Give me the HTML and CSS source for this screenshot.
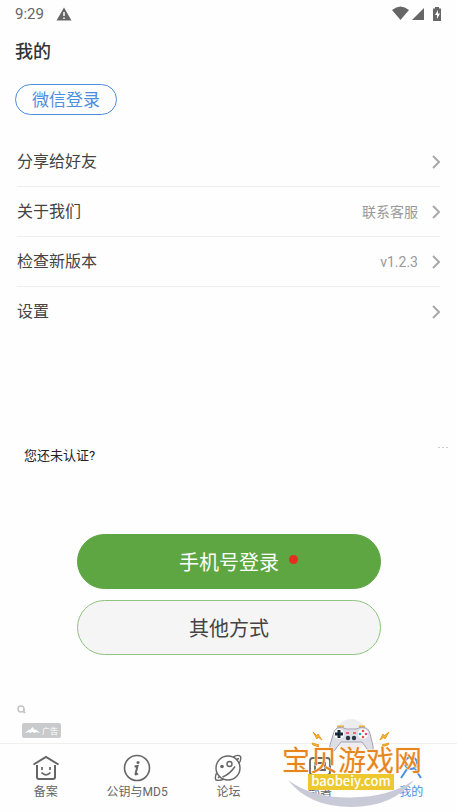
FILE: index.html
```html
<!DOCTYPE html>
<html lang="zh-CN">
<head>
<meta charset="utf-8">
<meta name="viewport" content="width=device-width, initial-scale=1">
<title>我的</title>
<link rel="stylesheet" href="styles.css">
</head>
<body>
<header class="status">
  <span class="time">9:29</span>
  <svg class="warn" width="16" height="14" viewBox="0 0 16 14"><path d="M8 .5 15.500 13.500H.5Z" fill="#666"/><path d="M8 5v4M8 10.500v1.500" stroke="#fff" stroke-width="1.500"/></svg>
  <svg class="signals" width="50" height="16" viewBox="0 0 50 16" fill="#666"><path d="M0 4Q8.500-3 17 4L8.500 14Z"/><path d="M32 2v12H20Z"/><path d="M43 1h4v1.500h2V15h-8V2.500h2Z"/><path d="m46 4-3 5h2v4l3-5.500h-2Z" fill="#fff"/></svg>
</header>
<main class="page">
  <h1 class="title">我的</h1>
  <button class="wechat" type="button">微信登录</button>
  <nav class="menu" aria-label="菜单">
    <a class="row" href="#share"><span class="label">分享给好友</span><svg class="chevron" viewBox="0 0 8 14"><path d="m1 1 6 6-6 6"/></svg></a>
    <a class="row" href="#about"><span class="label">关于我们</span><span class="value">联系客服</span><svg class="chevron" viewBox="0 0 8 14"><path d="m1 1 6 6-6 6"/></svg></a>
    <a class="row" href="#version"><span class="label">检查新版本</span><span class="value">v1.2.3</span><svg class="chevron" viewBox="0 0 8 14"><path d="m1 1 6 6-6 6"/></svg></a>
    <a class="row" href="#settings"><span class="label">设置</span><svg class="chevron" viewBox="0 0 8 14"><path d="m1 1 6 6-6 6"/></svg></a>
  </nav>
  <section class="auth">
    <div class="notice"><p class="question">您还未认证?</p><button class="more" type="button" aria-label="更多"><svg width="10" height="2" viewBox="0 0 10 2" fill="#ccc"><path d="M0 0h2v1H0zM4 0h2v1H4zM8 0h2v1H8z"/></svg></button></div>
    <div class="actions">
      <button class="login primary" type="button"><span class="caption">手机号登录<i class="dot"></i></span></button>
      <button class="login" type="button">其他方式</button>
    </div>
  </section>
  <footer class="ad">
    <svg width="9" height="9" viewBox="0 0 9 9" fill="none" stroke="#c5c5c5" stroke-width="1.500"><circle cx="4" cy="4" r="3"/><path d="M7 4v3.500h1.500"/></svg>
    <span class="ad-tag"><svg width="15" height="7" viewBox="0 0 15 7"><path d="M0 6 4 2.500 5 3 7.500 0 10 3l1-.5L15 6 11 5 10 6 7.500 5 5 6 4 5Z" fill="#fff"/></svg>广告</span>
  </footer>
</main>
<nav class="tabs" aria-label="主导航">
  <a class="tab" href="#record"><svg class="icon" viewBox="0 0 28 28"><path d="M1.500 10.500 14 3l12.500 7.500" stroke-width="2"/><path d="M5 11v12q0 2 2 2h14q2 0 2-2V11" stroke-width="2"/><path d="M10 13v3M18 13v3M9.500 18.500q4.500 4.500 9 0" stroke-width="1.700"/></svg>备案</a>
  <a class="tab" href="#md5"><svg class="icon" viewBox="0 0 28 28"><circle cx="14" cy="14" r="12.500" stroke-width="1.600"/><circle cx="15" cy="8.500" r="1.500" fill="currentColor" stroke="none"/><path d="m11.500 12.500 3-.5-2 8q0 1 2.500-.5" stroke-width="2"/></svg>公钥与MD5</a>
  <a class="tab" href="#forum"><svg class="icon" viewBox="0 0 28 28" stroke-width="1.400"><circle cx="14" cy="14" r="12"/><circle cx="15.500" cy="10" r="2.500"/><circle cx="8" cy="12.500" r="1.800" fill="currentColor" stroke="none"/><path d="M19 3q5-3 7.500-.5 1 3-1.500 7M22 5.500l3-1M2.500 19Q.5 24 2 26q4 1 8-1M8.500 23Q16 20 21 12.500M6 22l-2 2"/></svg>论坛</a>
  <a class="tab" href="#deploy"><svg class="icon" viewBox="0 0 28 28"><path d="M7 4h14q3 0 3 3v11q0 3-3 3h-4l-3 3-3-3H7q-3 0-3-3V7q0-3 3-3ZM9 9h10v7H9Z" stroke-width="1.800"/></svg>部署</a>
  <a class="tab active" href="#mine" aria-current="page"><svg class="icon" viewBox="0 0 28 28"><circle cx="14" cy="9" r="6" stroke-width="2"/><path d="m10 15-6 9M18 15l6 9" stroke-width="2"/></svg>我的</a>
</nav>
<svg class="brand" width="150" height="95" viewBox="0 0 150 95" role="img" aria-label="宝贝游戏网">
  <circle cx="71" cy="20" r="16" fill="#ededef"/>
  <path d="M8 65Q32 83 71 82.500T134 65Q113 92 71 92T8 65Z" fill="#c9cad7"/>
  <path d="M57 11.500h7M79 11.500h6" stroke="#e9b33c" stroke-width="2"/>
  <path d="M57 13q5-2 9 1h10q5-3 10-1 4 2 5 10l2 8q1 6-3 5-3-1-5-5l-3-4H61l-4 5q-3 6-6 4-2-1-1-6l3-10q1-5 4-7Z" fill="#dedee6" stroke="#a3a2b5"/>
  <circle cx="59" cy="19" r="5" fill="#fff"/><circle cx="83" cy="19" r="5" fill="#fff"/>
  <path d="M59 15v8M55 19h8" stroke="#182a38" stroke-width="3"/>
  <circle cx="83" cy="16" r="1.300" fill="#e8504c"/><circle cx="83" cy="22" r="1.300" fill="#e8504c"/><circle cx="80" cy="19" r="1.300" fill="#2d9fa9"/><circle cx="86" cy="19" r="1.300" fill="#d64c6d"/>
  <g fill="#263743"><circle cx="68" cy="23" r="2.200"/><circle cx="74" cy="23" r="2.200"/></g><path d="M66 18h3M73 18h3" stroke="#dc4b57" stroke-width="1.500"/>
  <path d="m33 17 4 4 1-2 4 6-4-3-1 2ZM32 28l7 2-2 1 2 1-6-2ZM109 17l-5 4-1-2-3 6 4-3 1 2ZM109 28l-7 2 2 1-3 1 7-2Z" fill="#f5bc36" stroke="#e99c22"/>
  <text class="brand-name" x="2" y="56">宝贝游戏网</text>
  <path d="M28 59h86v16H28Z" fill="#edc92f"/>
  <text class="brand-url" x="71" y="71" text-anchor="middle">baobeiy.com</text>
</svg>
</body>
</html>
```
FILE: styles.css
```css
* { box-sizing: border-box; }
body {
  margin: 0;
  min-height: 100vh;
  display: flex;
  flex-direction: column;
  position: relative;
  background: #fefefe;
  color: #444;
  font-family: Roboto, "Noto Sans CJK SC", sans-serif;
}
button { font: inherit; cursor: pointer; }
a { color: inherit; text-decoration: none; }
.status {
  display: flex;
  align-items: center;
  height: 28px;
  padding: 0 15px;
  color: #666;
}
.time { font-size: 15px; }
.warn { margin-left: 12px; }
.signals { margin-left: auto; }
.page {
  flex: 1;
  display: flex;
  flex-direction: column;
}
.title {
  margin: 10px 15px 18px;
  color: #333;
  font-size: 18px;
  line-height: 28px;
  font-weight: 500;
}
.wechat {
  align-self: flex-start;
  margin-left: 15px;
  height: 31px;
  padding: 0 16px;
  border: 1px solid #4c8fe0;
  border-radius: 16px;
  background: transparent;
  color: #4c8fe0;
  font-size: 17px;
  line-height: 28px;
}
.menu { margin: 22px 17px 0; }
.row {
  display: flex;
  align-items: center;
  height: 50px;
  border-bottom: 1px solid #eee;
}
.row:last-child { border-bottom: 0; }
.label { flex: 1; font-size: 16px; line-height: 24px; }
.value { color: #999; font-size: 14px; line-height: 20px; }
.chevron {
  width: 8px;
  height: 14px;
  margin-left: 14px;
  fill: none;
  stroke: #aaa;
  stroke-width: 2;
}
.auth { margin-top: 107px; }
.notice {
  display: flex;
  align-items: flex-start;
  justify-content: space-between;
  padding: 0 9px 0 24px;
}
.question {
  margin: 0;
  color: #222;
  font-size: 13px;
  line-height: 24px;
}
.more {
  display: flex;
  padding: 3px 0;
  border: 0;
  background: none;
}
.actions {
  display: flex;
  flex-direction: column;
  gap: 11px;
  margin: 66px 76px 0 77px;
}
.login {
  height: 55px;
  border: 1px solid #8fc37f;
  border-radius: 28px;
  background: #f5f5f5;
  color: #444;
  font-size: 20px;
}
.primary {
  border-color: #5da642;
  background: #5da642;
  color: #fff;
}
.caption { position: relative; }
.dot {
  position: absolute;
  top: 4px;
  right: -19px;
  width: 9px;
  height: 9px;
  border-radius: 50%;
  background: #e62e20;
}
.ad {
  display: flex;
  flex-direction: column;
  align-items: flex-start;
  gap: 9px;
  margin-top: auto;
  padding: 0 17px 5px;
}
.ad-tag {
  display: flex;
  align-items: center;
  gap: 2px;
  height: 15px;
  margin-left: 5px;
  padding: 0 3px;
  border-radius: 2px;
  background: #c9cacc;
  color: #fff;
  font-size: 8px;
}
.tabs {
  display: grid;
  grid-template-columns: repeat(5, 1fr);
  height: 69px;
  padding-top: 10px;
  border-top: 1px solid #f0f0f0;
}
.tab {
  display: flex;
  flex-direction: column;
  align-items: center;
  color: #666;
  font-size: 12px;
  line-height: 20px;
}
.active { color: #4c8fe0; }
.icon {
  width: 28px;
  height: 28px;
  fill: none;
  stroke: currentColor;
}
.brand {
  position: absolute;
  right: 27px;
  bottom: 2px;
  pointer-events: none;
}
.brand-name {
  fill: #e7861e;
  stroke: #fff3dc;
  stroke-width: 1px;
  paint-order: stroke;
  font-size: 28px;
}
.brand-url {
  fill: #fff;
  font-family: "Noto Sans CJK SC", sans-serif;
  font-size: 13px;
  font-weight: 500;
}
```
